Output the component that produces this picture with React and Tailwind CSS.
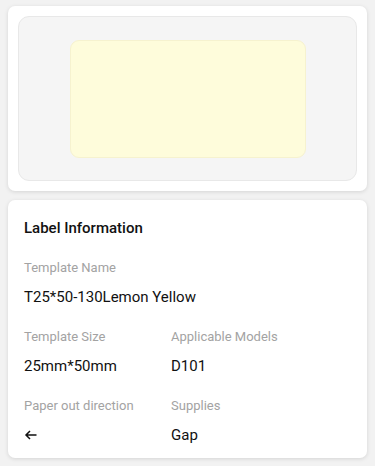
import React from "react";

function Field({ label, children }) {
  return (
    <div className="flex flex-col">
      <div className="text-[13px] leading-[16px] text-[#a3a3a3]">{label}</div>
      <div className="mt-[12px] text-[15px] leading-[18px] text-[#111]">{children}</div>
    </div>
  );
}

export default function App() {
  return (
    <div
      className="min-h-[466px] w-[375px] bg-[#f2f2f2] px-2 pt-[6px] pb-2"
      style={{ fontFamily: "Roboto, 'Noto Sans', sans-serif" }}
    >
      <div className="rounded-[7px] bg-white p-[10px] shadow-[0_1px_4px_rgba(0,0,0,0.12)]">
        <div className="flex h-[165px] items-center justify-center rounded-[11px] border border-[#e8e8e8] bg-[#f5f5f5]">
          <div className="h-[118px] w-[236px] rounded-[9px] border border-[#f6f2cf] bg-[#fefcdb]" />
        </div>
      </div>

      <div className="mt-[9px] rounded-[7px] bg-white px-4 pt-[19px] pb-[14px] shadow-[0_1px_4px_rgba(0,0,0,0.12)]">
        <div className="text-[15px] font-medium leading-[18px] text-[#111]">Label Information</div>

        <div className="mt-[23px]">
          <Field label="Template Name">T25*50-130Lemon Yellow</Field>
        </div>

        <div className="mt-[23px] grid grid-cols-[147px_1fr]">
          <Field label="Template Size">25mm*50mm</Field>
          <Field label="Applicable Models">D101</Field>
        </div>

        <div className="mt-[23px] grid grid-cols-[147px_1fr]">
          <Field label="Paper out direction">
            <svg width="14" height="18" viewBox="0 0 14 18" className="block">
              <path d="M12.5 9H2M6 5L2 9l4 4" fill="none" stroke="#111" strokeWidth="1.5" />
            </svg>
          </Field>
          <Field label="Supplies">Gap</Field>
        </div>
      </div>
    </div>
  );
}
